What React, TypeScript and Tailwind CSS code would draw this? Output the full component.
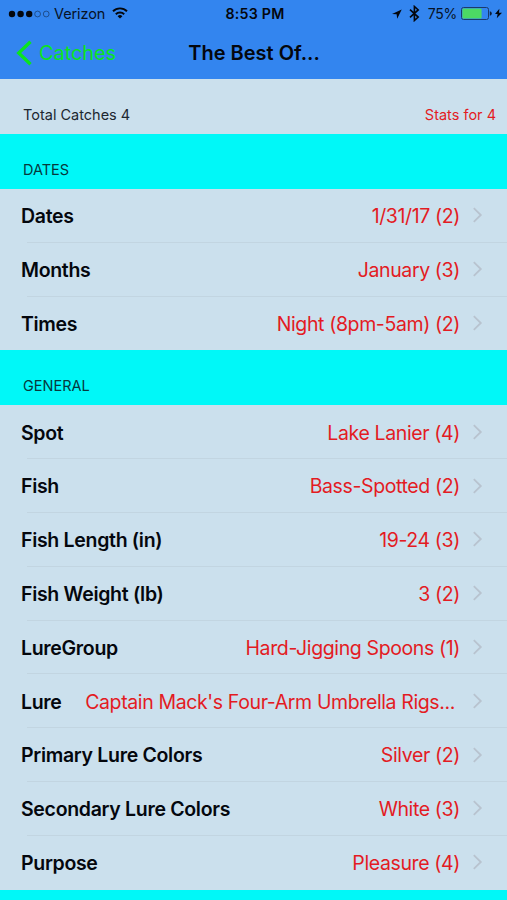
interface Stat {
  label: string
  value: string
  truncated?: boolean
}

interface Section {
  title: string
  rows: Stat[]
}

const sections: Section[] = [
  {
    title: 'DATES',
    rows: [
      { label: 'Dates', value: '1/31/17 (2)' },
      { label: 'Months', value: 'January (3)' },
      { label: 'Times', value: 'Night (8pm-5am) (2)' },
    ],
  },
  {
    title: 'GENERAL',
    rows: [
      { label: 'Spot', value: 'Lake Lanier (4)' },
      { label: 'Fish', value: 'Bass-Spotted (2)' },
      { label: 'Fish Length (in)', value: '19-24 (3)' },
      { label: 'Fish Weight (lb)', value: '3 (2)' },
      { label: 'LureGroup', value: 'Hard-Jigging Spoons (1)' },
      { label: 'Lure', value: "Captain Mack's Four-Arm Umbrella Rigs...", truncated: true },
      { label: 'Primary Lure Colors', value: 'Silver (2)' },
      { label: 'Secondary Lure Colors', value: 'White (3)' },
      { label: 'Purpose', value: 'Pleasure (4)' },
    ],
  },
]

function StatusBar() {
  return (
    <div className="grid h-[27px] grid-cols-[1fr_auto_1fr] items-center pl-[8px] pr-[5px] text-[14.5px]">
      <div className="flex items-center">
        <svg width="42" height="8" viewBox="0 0 42 8" stroke="#0b1a33">
          <circle cx="4" cy="4" r="3.2" fill="#04070d" stroke="none" />
          <circle cx="12.6" cy="4" r="3.2" fill="#04070d" stroke="none" />
          <circle cx="21.2" cy="4" r="3.2" fill="#04070d" stroke="none" />
          <circle cx="29.6" cy="4" r="2.9" fill="none" strokeWidth="0.5" />
          <circle cx="38.2" cy="4" r="2.9" fill="none" strokeWidth="0.5" />
        </svg>
        <span className="ml-[4px] tracking-[-0.1px] text-[#071226]">Verizon</span>
        <svg className="ml-[7px] -mt-[2px]" width="16" height="12" viewBox="0 0 16 12" fill="none" stroke="#04070d" strokeWidth="1.9">
          <path d="M1 4.2a10 10 0 0 1 14 0" />
          <path d="M3.8 7.2a6 6 0 0 1 8.4 0" />
          <path d="M8 11.6 5.6 9.2a3.4 3.4 0 0 1 4.8 0Z" fill="#04070d" stroke="none" />
        </svg>
      </div>
      <span className="text-[14.2px] font-semibold tracking-[0.25px]">8:53 PM</span>
      <div className="flex items-center justify-end">
        <svg width="10" height="10" viewBox="0 0 11 11" fill="#04070d">
          <path d="M10.7.5 0 5.4l5.1.5.6 4.9Z" />
        </svg>
        <svg className="ml-[7px]" width="11" height="17" viewBox="0 0 11 17" fill="none" stroke="#04070d" strokeWidth="1.6">
          <path d="m1 4.6 8.2 7.5-3.8 3.4v-14l3.8 3.4L1 12.4" />
        </svg>
        <span className="ml-[8px] text-[14px] tracking-[-0.3px] text-[#071226]">75%</span>
        <svg className="ml-[4px]" width="31" height="13" viewBox="0 0 31 13">
          <rect x="0.5" y="0.5" width="27" height="12" rx="2" fill="none" stroke="#1b3a6b" />
          <rect x="1.4" y="1.4" width="19.2" height="10.2" rx="1" fill="#4cd964" />
          <path d="M28.8 4.3q2 .5 2 2.2t-2 2.2Z" fill="#0b1a33" />
        </svg>
        <svg className="ml-[3px]" width="7" height="11" viewBox="0 0 8 11" fill="#04070d">
          <path d="M5 0 0 6h3L2 11l6-6.5H4.6Z" />
        </svg>
      </div>
    </div>
  )
}

function NavBar() {
  return (
    <div className="grid h-[52px] grid-cols-[1fr_auto_1fr] items-center pl-[16px] pr-[15px]">
      <div className="flex items-center text-[#0be41f]">
        <svg width="17" height="26" viewBox="0 0 17 26" fill="none" stroke="currentColor" strokeWidth="3.3">
          <path d="M14.5 1.7 2.7 13l11.8 11.3" />
        </svg>
        <span className="ml-[6px] text-[20px] tracking-[-0.1px]">Catches</span>
      </div>
      <h1 className="text-[20px] font-semibold">The Best Of...</h1>
    </div>
  )
}

function StatRow({ label, value, truncated }: Stat) {
  return (
    <div className="group pl-[21px]">
      <div className="flex h-[53.8px] items-center justify-between pr-[24px] text-[19.5px]">
        <span className="pt-[2px] font-semibold tracking-[-0.31px] whitespace-nowrap">{label}</span>
        <div className="flex items-center">
          <span
            className={`pt-[2px] tracking-[-0.38px] whitespace-nowrap text-[#e31b23] ${truncated ? 'pr-[5px]' : ''}`}
          >
            {value}
          </span>
          <svg className="-mt-px ml-[12px]" width="11" height="16" viewBox="0 0 11 16" fill="none" stroke="#b8c3cf" strokeWidth="1.8">
            <path d="m1.8 1.2 7 6.8-7 6.8" />
          </svg>
        </div>
      </div>
      <div className="-mt-px ml-[6px] h-px bg-[#c2d5e1] group-last:invisible" />
    </div>
  )
}

export default function App() {
  return (
    <div className="h-[900px] w-[507px] overflow-hidden bg-[#cbe0ed] font-['Inter','Liberation_Sans',sans-serif] text-[#04070d]">
      <header className="h-[79px] bg-[#3385ef]">
        <StatusBar />
        <NavBar />
      </header>

      <div className="flex h-[55px] items-end justify-between pr-[11px] pb-[9px] pl-[23px] text-[14.5px] leading-5">
        <span className="text-[#1c2730]">Total Catches 4</span>
        <span className="text-[#e31b23]">Stats for 4</span>
      </div>

      {sections.map((section) => (
        <section key={section.title}>
          <h2 className="flex h-[55px] items-end bg-[#00f8f8] pb-[9px] pl-[23px] text-[14.5px] leading-5 text-[#06393d]">
            {section.title}
          </h2>
          <div>
            {section.rows.map((row) => (
              <StatRow key={row.label} {...row} />
            ))}
          </div>
        </section>
      ))}

      {/* Top edge of the next section header */}
      <div className="h-[55px] bg-[#00f8f8]" />
    </div>
  )
}
